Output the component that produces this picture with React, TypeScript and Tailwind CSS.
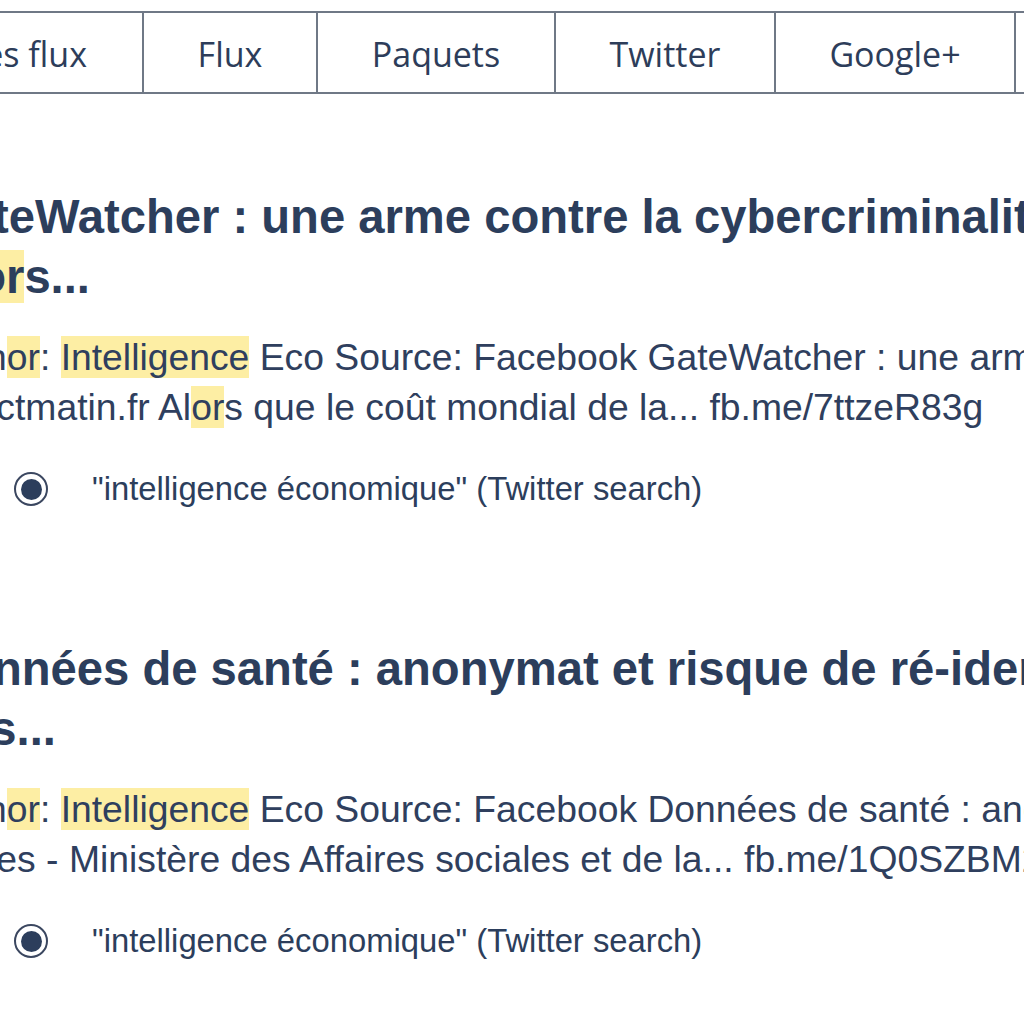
import React from "react";

const tabs = [
  { label: "Tous les flux", w: "w-[144px] justify-end pr-[55px]" },
  { label: "Flux", w: "w-[174px] justify-center" },
  { label: "Paquets", w: "w-[238px] justify-center" },
  { label: "Twitter", w: "w-[220px] justify-center" },
  { label: "Google+", w: "w-[240px] justify-center" },
];

const Mark = ({ children }: { children: React.ReactNode }) => (
  <span className="bg-[#fdeea4]">{children}</span>
);

const Radio = () => (
  <span className="flex h-[34px] w-[34px] items-center justify-center rounded-full border-2 border-[#3b4760] bg-white">
    <span className="h-[21px] w-[21px] rounded-full bg-[#2c3e5c]" />
  </span>
);

type Item = {
  title: React.ReactNode[];
  body: React.ReactNode[];
  source: string;
};

const items: Item[] = [
  {
    title: [
      <>GateWatcher : une arme contre la cybercriminalité - Factmatin.fr</>,
      <>
        Al<Mark>or</Mark>s...
      </>,
    ],
    body: [
      <>
        Auth<Mark>or</Mark>: <Mark>Intelligence</Mark> Eco Source: Facebook GateWatcher : une arme contre la cybercriminalité
      </>,
      <>
        - Factmatin.fr Al<Mark>or</Mark>s que le coût mondial de la... fb.me/7ttzeR83g
      </>,
    ],
    source: "\"intelligence économique\" (Twitter search)",
  },
  {
    title: [
      <>Données de santé : anonymat et risque de ré-identification</>,
      <>Dés...</>,
    ],
    body: [
      <>
        Auth<Mark>or</Mark>: <Mark>Intelligence</Mark> Eco Source: Facebook Données de santé : anonymat et risque de ré-identification
      </>,
      <>Pages - Ministère des Affaires sociales et de la... fb.me/1Q0SZBM2bK</>,
    ],
    source: "\"intelligence économique\" (Twitter search)",
  },
];

export default function App() {
  return (
    <div className="h-[1024px] w-[1024px] overflow-hidden bg-white text-[#2c3e5c]">
      {/* Tab bar */}
      <div className="mt-[11px] flex h-[83px] border-y-2 border-[#6f7886] font-['Open_Sans',sans-serif] text-[34px] text-[#2d3d5a]">
        {tabs.map((t) => (
          <div
            key={t.label}
            className={`flex shrink-0 items-center whitespace-nowrap border-r-2 border-[#6f7886] pt-[3px] ${t.w}`}
          >
            {t.label}
          </div>
        ))}
        <div className="flex-1" />
      </div>

      {/* Results */}
      <div className="ml-[-70px] font-['Liberation_Sans',Arial,sans-serif]">
        {items.map((item, i) => (
          <div key={i} className={i === 0 ? "pt-[93px]" : "pt-[130px]"}>
            <h2 className="whitespace-nowrap text-[47.2px] font-bold leading-[60px]">
              {item.title.map((l, j) => (
                <div key={j}>{l}</div>
              ))}
            </h2>
            <div className="mt-[25px] whitespace-nowrap text-[37.3px] leading-[50px] text-[#2f3f5e]">
              {item.body.map((l, j) => (
                <div key={j}>{l}</div>
              ))}
            </div>
            <div className="mt-[37px] flex h-[40px] items-center gap-[44px] pl-[84px] whitespace-nowrap text-[32.8px]">
              <Radio />
              <span>{item.source}</span>
            </div>
          </div>
        ))}
      </div>
    </div>
  );
}
